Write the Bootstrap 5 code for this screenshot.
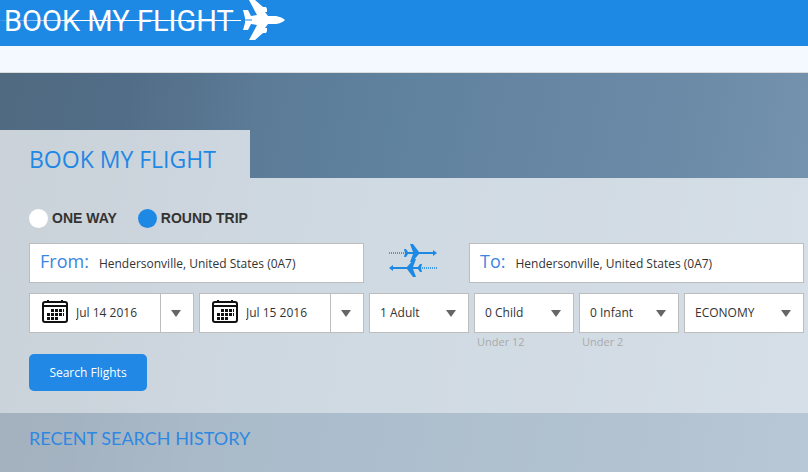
<!DOCTYPE html>
<html lang="en">
<head>
<meta charset="utf-8">
<meta name="viewport" content="width=device-width, initial-scale=1">
<title>Book My Flight</title>
<link href="https://cdn.jsdelivr.net/npm/bootstrap@5.3.0/dist/css/bootstrap.min.css" rel="stylesheet">
<style>
  :root { --brand: #1e88e5; --line: #bdbdbd; }
  body { font-family: "Open Sans", "Noto Sans", sans-serif; font-size: 12px; line-height: 16px; color: #333; }
  .topbar { background: var(--brand); height: 46px; }
  .brand { font: 400 29px/43px Roboto, sans-serif; color: #fff; padding-left: 4px; gap: 8px; }
  .brand:hover { color: #fff; }
  .brand-trail { left: 0; top: 20px; width: 241px; height: 1px; background: linear-gradient(90deg, rgba(255,255,255,.1), #fff 80px); }
  .subbar { height: 27px; background: #f4f8ff; border-bottom: 1px solid #dcdcdc; }
  .hero { padding-top: 57px; background: linear-gradient(100deg, #506a80 0, #526d88 15%, #5c7b96 30%, #5f829f 46%, #6685a2 60%, #6c8ba7 80%, #7896b0 100%); }
  .hero-tab { width: 250px; height: 48px; padding: 13px 0 0 29px; background: rgba(255,255,255,.7); }
  .hero-title { font-family: "Open Sans", sans-serif; font-size: 23px; line-height: 32px; color: var(--brand); font-weight: 400; }
  .search-panel { background: rgba(255,255,255,.7); padding: 30px 4px 22px 29px; }
  .trip { gap: 21px; height: 20px; margin-bottom: 15px; }
  .trip label { font: bold 14px/20px "Liberation Sans", Arial, sans-serif; }
  .trip .form-check-input { width: 19px; height: 19px; margin: 0 4px 0 0; border: 0; background: #fff; }
  .trip .form-check-input:checked { background: var(--brand); }
  .route-grid { display: grid; grid-template-columns: 335fr 105fr 335fr; margin-bottom: 10px; }
  .option-grid { display: grid; grid-template-columns: 165fr 165fr 100fr 100fr 100fr 120fr; column-gap: 5px; height: 61px; }
  .box { height: 40px; background-color: #fff; border: 1px solid var(--line); min-width: 0; }
  .box input { border: 0; padding: 0; min-width: 0; color: #333; background: none; }
  .route-label { font-size: 18px; line-height: 24px; color: #3b86e0; padding: 5px 10px 0 10px; }
  .box .place { height: 38px; padding-top: 1px; }
  .swap { padding-right: 8px; }
  .date-icon { margin: 0 8px 5px 12px; }
  .drop { width: 33px; border: 0; border-left: 1px solid var(--line); background: #fff; padding: 0 2px 0 0; }
  .pick { font-size: 12px; line-height: 16px; color: #333; border-radius: 0; padding: 0 24px 0 10px; background-size: 10px 7px; background-position: right 12px center;
    background-image: url("data:image/svg+xml,%3Csvg xmlns='http://www.w3.org/2000/svg' viewBox='0 0 10 7'%3E%3Cpath fill='%23666' d='M0 0h10L5 7z'/%3E%3C/svg%3E"); }
  .hint { font-size: 11px; line-height: 16px; color: #aaa; padding: 1px 0 0 3px; }
  .go { background: #2288e5; color: #fff; font-size: 12px; line-height: 16px; width: 118px; height: 37px; border-radius: 5px; padding: 0; border: 0; }
  .go:hover { background: #1976d2; color: #fff; }
  .history { background: rgba(255,255,255,.48); padding: 13px 29px 21px; }
  .history h2 { font-family: Lato, sans-serif; font-size: 18px; line-height: 25px; color: #2d88e2; font-weight: 400; }
</style>
<script src="https://cdn.jsdelivr.net/npm/bootstrap@5.3.0/dist/js/bootstrap.bundle.min.js" defer></script>
</head>
<body>
<header>
  <div class="topbar position-relative">
    <a href="#" class="brand d-inline-flex align-items-start text-decoration-none text-nowrap">
      <span>BOOK MY FLIGHT</span>
      <svg width="44" height="40" viewBox="0 0 44 40" aria-hidden="true"><path fill="#fff" d="M7 0h6l8 7h3l1 2v3h-2l3 4h8q6 1 9 4-3 3-9 4h-8l-3 4h2v3l-1 2h-3l-8 7H7l8-15-6-1-3 6H1l2-7v-5L1 10h5l3 6 6-1z"/><path fill="#8cc2f2" d="M3 19h7v2H3z"/></svg>
    </a>
    <span class="brand-trail position-absolute"></span>
  </div>
  <div class="subbar"></div>
</header>
<main class="hero">
  <div class="hero-tab"><h1 class="hero-title m-0">BOOK MY FLIGHT</h1></div>
  <form class="search-panel">
    <div class="trip d-flex align-items-center">
      <div class="d-flex align-items-center"><input class="form-check-input" type="radio" name="trip" id="oneway"><label for="oneway">ONE WAY</label></div>
      <div class="d-flex align-items-center"><input class="form-check-input" type="radio" name="trip" id="round" checked><label for="round">ROUND TRIP</label></div>
    </div>
    <div class="route-grid">
      <div class="box d-flex"><label class="route-label" for="from">From:</label><input class="place flex-grow-1" id="from" type="text" value="Hendersonville, United States (0A7)"></div>
      <div class="swap d-flex justify-content-center">
        <svg width="56" height="40" viewBox="0 0 56 40" aria-hidden="true">
          <defs><g id="jet"><path fill="#1e88e5" d="M15 6l2 0 2 3h5L21 1h3l6 8h7q2 1 0 2h-7l-7 8h-2l3-8h-5l-2 3h-2l1-4zM37 9h7V7l4 3-4 3v-2h-7z"/><path stroke="#1e88e5" stroke-opacity=".8" stroke-width="2" stroke-dasharray="1 1" d="M0 10h15"/></g></defs>
          <use href="#jet" x="4"/><use href="#jet" transform="rotate(180 26 17.500)"/>
        </svg>
      </div>
      <div class="box d-flex"><label class="route-label" for="to">To:</label><input class="place flex-grow-1" id="to" type="text" value="Hendersonville, United States (0A7)"></div>
    </div>
    <div class="option-grid">
      <div class="box d-flex">
        <svg class="date-icon align-self-center flex-shrink-0" width="26" height="24" viewBox="0 0 26 24" aria-hidden="true"><g id="cal"><rect x="1" y="3" width="24" height="20" rx="2" fill="none" stroke="#111" stroke-width="2"/><path fill="none" stroke="#111" stroke-width="2" d="M1 7h24M6 1v3M20 1v3"/><path fill="none" stroke="#111" stroke-width="3" stroke-dasharray="3 1" d="M9 11.500h13M5 15.500h17M5 19.500h11"/></g></svg>
        <input class="flex-grow-1" type="text" value="Jul 14 2016" aria-label="Departure date">
        <button class="drop flex-shrink-0" type="button" aria-label="Choose departure date"><svg width="10" height="7" viewBox="0 0 10 7"><path fill="#666" d="M0 0h10L5 7z"/></svg></button>
      </div>
      <div class="box d-flex">
        <svg class="date-icon align-self-center flex-shrink-0" width="26" height="24" viewBox="0 0 26 24" aria-hidden="true"><use href="#cal"/></svg>
        <input class="flex-grow-1" type="text" value="Jul 15 2016" aria-label="Return date">
        <button class="drop flex-shrink-0" type="button" aria-label="Choose return date"><svg width="10" height="7" viewBox="0 0 10 7"><path fill="#666" d="M0 0h10L5 7z"/></svg></button>
      </div>
      <div><select class="form-select box pick" aria-label="Adults"><option>1 Adult</option></select></div>
      <div><select class="form-select box pick" id="child" aria-label="Children"><option>0 Child</option></select><label class="hint" for="child">Under 12</label></div>
      <div><select class="form-select box pick" id="infant" aria-label="Infants"><option>0 Infant</option></select><label class="hint" for="infant">Under 2</label></div>
      <div><select class="form-select box pick" aria-label="Cabin class"><option>ECONOMY</option></select></div>
    </div>
    <button class="btn go d-block" type="submit">Search Flights</button>
  </form>
  <section class="history"><h2 class="m-0">RECENT SEARCH HISTORY</h2></section>
</main>
</body>
</html>
